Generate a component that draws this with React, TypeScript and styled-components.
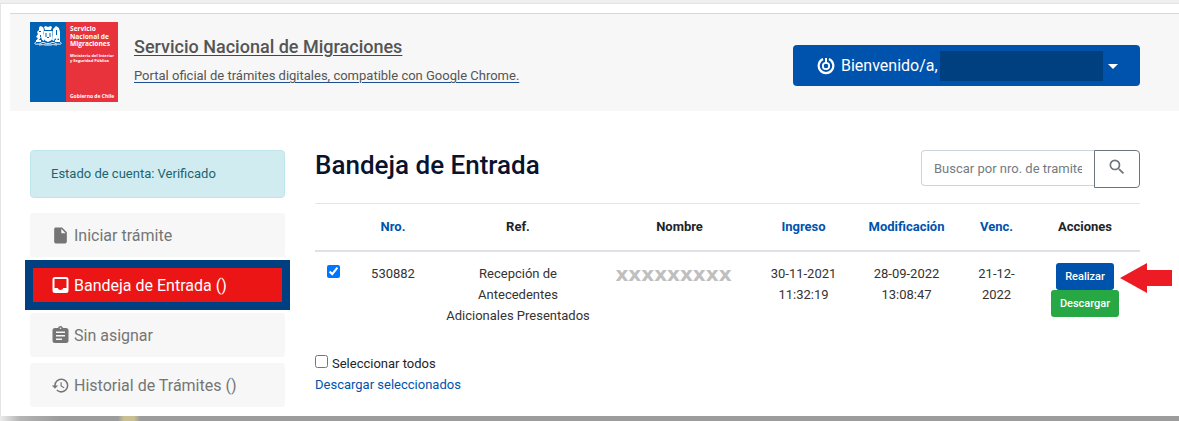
import React from "react";
import styled, { createGlobalStyle } from "styled-components";
import { MdHistory, MdInsertDriveFile, MdSearch } from "react-icons/md";

const GlobalStyle = createGlobalStyle`
  *, *::before, *::after { box-sizing: border-box; }
  body {
    margin: 0;
    background: #f0f0f0;
    color: #212529;
    font: 400 13px/21px Roboto, "Liberation Sans", sans-serif;
  }
  button, input { font: inherit; }
  a { text-decoration: none; }
`;

const Page = styled.div`
  display: flex;
  flex-direction: column;
  min-height: 100vh;
  padding-top: 4px;
`;

const Sheet = styled.div`
  margin-left: 1px;
  padding: 9px 0 9px 9px;
  background: #fff;
  box-shadow: 0 0 1px 1px #e4e4e4;
`;

const SheetShadow = styled.div`
  position: relative;
  flex: 1;
  min-height: 5px;
  background:
    linear-gradient(90deg, transparent 118px, #c9bf93 124px, #c9bf93 134px, transparent 140px),
    linear-gradient(90deg, #ececec, #b4b4b4 20px, #9c9c9c 60px);
`;

const Header = styled.header`
  display: flex;
  justify-content: space-between;
  height: 98px;
  padding: 8px 39px 0 20px;
  border-top: 1px solid #d8d8d8;
  background: #f7f7f7;
`;

const Brand = styled.div`
  display: flex;
  gap: 16px;
`;

const Logo = styled.svg`
  display: block;
  width: 88px;
  height: 80px;
`;

const BrandLink = styled.a`
  display: flex;
  flex-direction: column;
  gap: 8px;
  padding-top: 14px;
  color: #555;
  text-decoration: underline;
  text-decoration-color: #1b4d8f;
  text-underline-offset: 2px;
`;

const BrandName = styled.span`
  font-size: 18px;
  font-weight: 500;
  line-height: 22px;
`;

const BrandTagline = styled.span`
  line-height: 20px;
`;

const UserMenu = styled.button`
  display: flex;
  align-items: center;
  width: 347px;
  height: 41px;
  margin-top: 23px;
  padding: 0 22px 0 24px;
  border: 0;
  border-radius: 4px;
  background: #0053ad;
  color: #fff;
  font-size: 16px;
`;

const UserLabel = styled.span`
  margin-left: 6px;
`;

const HiddenName = styled.span`
  flex: 1;
  height: 30px;
  margin: 0 5px 0 2px;
  background: #004080;
`;

const Caret = styled.svg`
  width: 10px;
  height: 5px;
  margin-top: 2px;
`;

const Content = styled.div`
  display: flex;
  gap: 30px;
  padding: 39px 39px 0 20px;
`;

const Sidebar = styled.aside`
  flex: none;
  width: 255px;
`;

const Status = styled.div`
  height: 48px;
  margin-bottom: 15px;
  padding: 12px 20px;
  border: 1px solid #bee5eb;
  border-radius: 4px;
  background: #d1ecf1;
  color: #1c6472;
`;

const Menu = styled.nav`
  display: flex;
  flex-direction: column;
  gap: 6px;
`;

const MenuItem = styled.a<{ $active?: boolean }>`
  display: flex;
  align-items: center;
  gap: 4px;
  height: ${(p) => (p.$active ? "50px" : "44px")};
  margin: ${(p) => (p.$active ? "-3px -5px" : "0")};
  padding: ${(p) => (p.$active ? "0 18px" : "0 21px")};
  border: ${(p) => (p.$active ? "8px solid #004080" : "0")};
  border-radius: ${(p) => (p.$active ? "0" : "3px")};
  background: ${(p) => (p.$active ? "#ec1515" : "#f7f7f7")};
  color: ${(p) => (p.$active ? "#fff" : "#757575")};
  font-size: 16px;

  svg { flex: none; width: 19px; height: 19px; }
`;

const Main = styled.main`
  flex: 1;
  min-width: 0;
`;

const TitleBar = styled.div`
  display: flex;
  justify-content: space-between;
  align-items: flex-start;
  height: 53px;
`;

const Title = styled.h1`
  margin: 0;
  color: #0a132d;
  font-size: 26px;
  font-weight: 500;
  line-height: 31px;
`;

const Search = styled.form`
  display: flex;
  align-items: flex-start;
`;

const SearchInput = styled.input`
  width: 173px;
  height: 36px;
  padding: 0 12px;
  border: 1px solid #ced4da;
  border-right: 0;
  border-radius: 4px 0 0 4px;

  &::placeholder { color: #757b82; opacity: 1; }
`;

const SearchButton = styled.button`
  display: flex;
  justify-content: center;
  width: 46px;
  height: 38px;
  padding: 6px 0;
  border: 1px solid #6c757d;
  border-radius: 0 4px 4px 0;
  background: #fff;
  color: #6c757d;
  font-size: 20px;
`;

const Table = styled.table`
  width: 100%;
  border-collapse: collapse;
  table-layout: fixed;
  text-align: center;

  th {
    height: 47px;
    padding: 0 0 1px;
    border-top: 1px solid #e3e5e8;
    border-bottom: 2px solid #dee2e6;
    font-weight: 700;
  }
  th a { color: #0053ad; }
  td {
    height: 81px;
    padding: 11px 10px 0;
    vertical-align: top;
    color: #333;
  }
`;

const Check = styled.input`
  display: block;
  width: 13px;
  height: 13px;
  margin: 0;
`;

const CheckCell = styled.div`
  display: flex;
  justify-content: center;
  padding-top: 2px;
`;

const MaskedName = styled.div`
  padding-right: 12px;
  color: #bfbfbf;
  font: 700 20px/22px "DejaVu Sans", sans-serif;
`;

const Actions = styled.div`
  position: relative;
  display: flex;
  flex-direction: column;
  align-items: center;
`;

const ActionButton = styled.button<{ $color: string }>`
  height: 27px;
  padding: 0 9px;
  border: 0;
  border-radius: 3px;
  background: ${(p) => p.$color};
  color: #fff;
  font-size: 11px;
  font-weight: 500;
`;

const Pointer = styled.svg`
  position: absolute;
  top: 0;
  right: -42px;
  width: 52px;
  height: 30px;
`;

const Bulk = styled.div`
  display: flex;
  flex-direction: column;
  align-items: flex-start;
  margin-top: 21px;

  a { color: #0053ad; }
`;

const SelectAll = styled.label`
  display: flex;
  gap: 4px;

  input { margin-top: 2px; }
`;

const widths = [37, 82, 168, 155, 93, 113, 67, 110];

const ChileLogo = () => (
  <Logo viewBox="0 0 88 80" role="img" aria-label="Servicio Nacional de Migraciones">
    <path fill="#0062b1" d="M0 0h36v80H0z" />
    <path fill="#e8333c" d="M36 0h52v80H36z" />
    <g fill="#fff">
      <path d="M14 5l1.500-1 2.500 1 2.500-1 1.500 1-1 3h-6z" />
      <path d="M13.500 9h9v7c0 2-2.500 3-4.500 4-2-1-4.500-2-4.500-4z" />
      <path d="M9 6l1-2 3 1 1 3-1 3 1 3v5l-2-1-1-3-2 3-3 1 2-3-2-1 2-3-1-2 2-2z" />
      <path d="M23 7l3-3 3 2 1 4v9l-2-3-1 3-2-3-1 3-2-1 1-5z" />
      <path d="M6 18h5v2H6zM25 18h5v2h-5z" />
    </g>
    <path fill="#0062b1" d="M15.500 11h1v4h-1zM19.500 11h1v4h-1zM17 15h2v1h-2zM9 9h2v1H9zM26 8h1v5h-1zM10 13h1v2h-1z" />
    <path fill="none" stroke="#fff" d="M6 20c-2 1-1 3 1 2 3 1 5-3 8-1 2 1 4 1 6 0 3-2 5 2 8 1 2 1 3-1 1-2M9 23c3 0 4-1 6 0h6c2-1 3 0 6 0" />
    <g fill="#fff" fontFamily='"Open Sans", sans-serif'>
      <g fontSize="6.600" fontWeight="700">
        <text x="40" y="9">Servicio</text>
        <text x="40" y="16.500">Nacional de</text>
        <text x="40" y="24.200">Migraciones</text>
      </g>
      <g fontSize="4" fontWeight="700">
        <text x="40" y="34.500">Ministerio del Interior</text>
        <text x="40" y="40">y Seguridad Pública</text>
      </g>
      <text x="40" y="76" fontSize="5" fontWeight="700">Gobierno de Chile</text>
    </g>
  </Logo>
);

const SessionIcon = () => (
  <svg width="18" height="18" viewBox="0 0 18 18" fill="none" stroke="#fff" aria-hidden="true">
    <path strokeWidth="2.200" d="M6 2.100a7.300 7.300 0 1 0 6 0" />
    <circle cx="9" cy="9" r="3.200" strokeWidth="1.800" />
    <path strokeWidth="2" d="M9 1v5" />
  </svg>
);

const InboxIcon = () => (
  <svg viewBox="0 0 19 19" aria-hidden="true">
    <path
      fill="currentColor"
      fillRule="evenodd"
      d="M4 1h11a2.500 2.500 0 0 1 2.500 2.500v11A2.500 2.500 0 0 1 15 17H4a2.500 2.500 0 0 1-2.500-2.500v-11A2.500 2.500 0 0 1 4 1zM3.500 3v9h3.200a3 3 0 0 0 5.600 0h3.200V3z"
    />
  </svg>
);

const ClipboardIcon = () => (
  <svg viewBox="0 0 19 19" aria-hidden="true">
    <path
      fill="currentColor"
      fillRule="evenodd"
      d="M4 2h3a2.600 2.600 0 0 1 5 0h3a2.500 2.500 0 0 1 2.500 2.500v10A2.500 2.500 0 0 1 15 17H4a2.500 2.500 0 0 1-2.500-2.500v-10A2.500 2.500 0 0 1 4 2zM9.500 1.500a.8.800 0 1 0 0 1.600.8.800 0 0 0 0-1.600zM5 5.500V7h9V5.500zM5 9v1.500h9V9zM5 12.500V14h6v-1.500z"
    />
  </svg>
);

export default function App() {
  return (
    <>
      <GlobalStyle />
      <Page>
        <Sheet>
          <Header>
            <Brand>
              <ChileLogo />
              <BrandLink href="#inicio">
                <BrandName>Servicio Nacional de Migraciones</BrandName>
                <BrandTagline>Portal oficial de trámites digitales, compatible con Google Chrome.</BrandTagline>
              </BrandLink>
            </Brand>
            <UserMenu type="button" aria-haspopup="menu">
              <SessionIcon />
              <UserLabel>Bienvenido/a,</UserLabel>
              <HiddenName />
              <Caret viewBox="0 0 10 5" aria-hidden="true">
                <path fill="#fff" d="M0 0h10L5 5z" />
              </Caret>
            </UserMenu>
          </Header>
          <Content>
            <Sidebar>
              <Status>Estado de cuenta: Verificado</Status>
              <Menu>
                <MenuItem href="#iniciar"><MdInsertDriveFile />Iniciar trámite</MenuItem>
                <MenuItem href="#bandeja" $active aria-current="page"><InboxIcon />Bandeja de Entrada ()</MenuItem>
                <MenuItem href="#sin-asignar"><ClipboardIcon />Sin asignar</MenuItem>
                <MenuItem href="#historial"><MdHistory />Historial de Trámites ()</MenuItem>
              </Menu>
            </Sidebar>
            <Main>
              <TitleBar>
                <Title>Bandeja de Entrada</Title>
                <Search>
                  <SearchInput type="text" aria-label="Buscar por nro. de tramite" placeholder="Buscar por nro. de tramite" />
                  <SearchButton type="button" aria-label="Buscar"><MdSearch /></SearchButton>
                </Search>
              </TitleBar>
              <Table>
                <colgroup>
                  {widths.map((w, i) => <col key={i} width={w} />)}
                </colgroup>
                <thead>
                  <tr>
                    <th aria-label="Seleccionar" />
                    <th><a href="#nro">Nro.</a></th>
                    <th>Ref.</th>
                    <th>Nombre</th>
                    <th><a href="#ingreso">Ingreso</a></th>
                    <th><a href="#modificacion">Modificación</a></th>
                    <th><a href="#venc">Venc.</a></th>
                    <th>Acciones</th>
                  </tr>
                </thead>
                <tbody>
                  <tr>
                    <td><CheckCell><Check type="checkbox" defaultChecked aria-label="Seleccionar 530882" /></CheckCell></td>
                    <td>530882</td>
                    <td>Recepción de Antecedentes Adicionales Presentados</td>
                    <td><MaskedName>xxxxxxxxx</MaskedName></td>
                    <td>30-11-2021 11:32:19</td>
                    <td>28-09-2022 13:08:47</td>
                    <td>21-12-2022</td>
                    <td>
                      <Actions>
                        <ActionButton type="button" $color="#0053ad">Realizar</ActionButton>
                        <ActionButton type="button" $color="#28a745">Descargar</ActionButton>
                        <Pointer viewBox="0 0 52 30" aria-hidden="true">
                          <path fill="#ed1c24" d="M0 15L27 0v7h25v16H27v7z" />
                        </Pointer>
                      </Actions>
                    </td>
                  </tr>
                </tbody>
              </Table>
              <Bulk>
                <SelectAll><Check type="checkbox" />Seleccionar todos</SelectAll>
                <a href="#descargar">Descargar seleccionados</a>
              </Bulk>
            </Main>
          </Content>
        </Sheet>
        <SheetShadow />
      </Page>
    </>
  );
}
